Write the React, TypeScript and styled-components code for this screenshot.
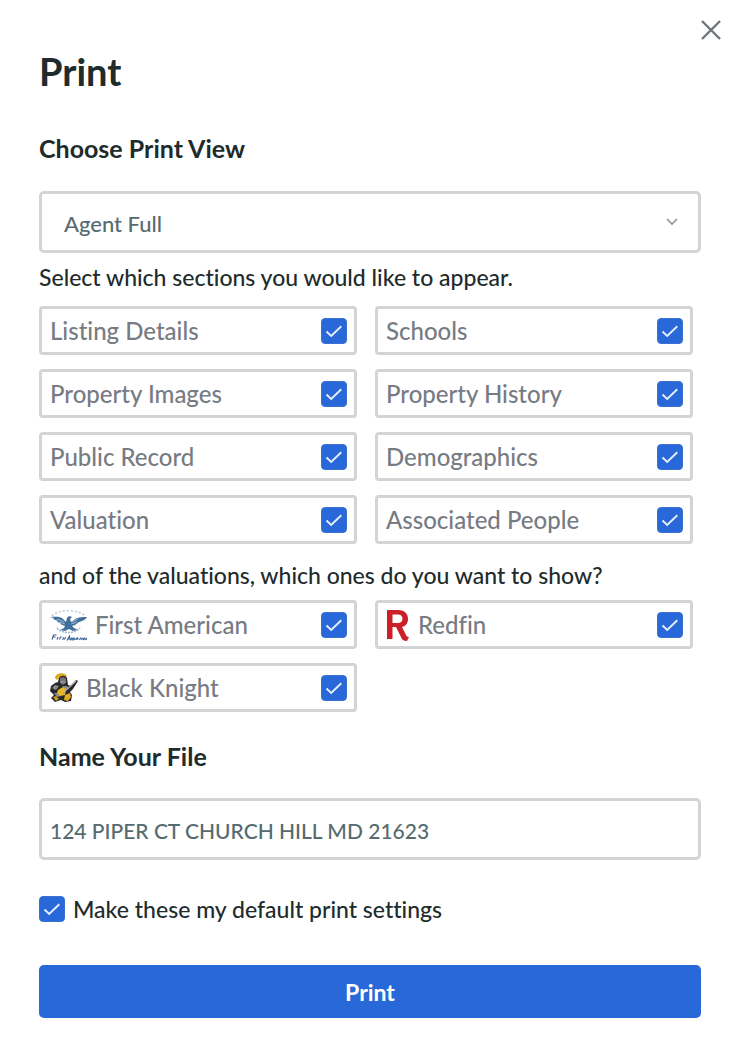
import React, { useState } from 'react';
import styled, { createGlobalStyle } from 'styled-components';

const GlobalStyle = createGlobalStyle`
  *, *::before, *::after { box-sizing: border-box; }
  body {
    margin: 0;
    background: #fff;
    color: #212b2b;
    font-family: Lato, "Liberation Sans", sans-serif;
    font-weight: 500;
    font-variant-ligatures: none;
  }
`;

const Dialog = styled.main`
  display: flex;
  flex-direction: column;
  padding: 18px 43px 30px 39px;
`;

const TopBar = styled.div`
  display: flex;
  justify-content: flex-end;
  height: 24px;
  margin-right: -22px;
`;

const CloseButton = styled.button`
  display: flex;
  align-items: center;
  justify-content: center;
  width: 24px;
  height: 24px;
  padding: 0;
  border: 0;
  background: none;
  color: #6f747d;
  cursor: pointer;
`;

const Title = styled.h1`
  margin: 6px 0 10px;
  font-size: 38px;
  line-height: 46px;
  font-weight: 700;
`;

const FieldHeading = styled.label`
  display: block;
  margin-top: 28px;
  font-size: 25px;
  line-height: 32px;
  font-weight: 700;
`;

const SelectBox = styled.div`
  display: grid;
  align-items: center;
  margin-top: 27px;
  & > * { grid-area: 1 / 1; }
  & > svg {
    justify-self: end;
    margin-right: 22px;
    color: #8c979b;
    pointer-events: none;
  }
`;

const Select = styled.select`
  appearance: none;
  width: 100%;
  height: 62px;
  padding: 2px 48px 0 22px;
  border: 3px solid #d4d4d4;
  border-radius: 5px;
  background: #fff;
  color: #566b70;
  font: inherit;
  font-size: 22px;
`;

const TextInput = styled.input`
  width: 100%;
  height: 62px;
  margin-top: 26px;
  padding: 2px 8px 0;
  border: 3px solid #d4d4d4;
  border-radius: 5px;
  background: #fff;
  color: #566b70;
  font: inherit;
  font-size: 21px;
`;

const Group = styled.fieldset`
  min-width: 0;
  margin: 0;
  padding: 0;
  border: 0;
`;

const Legend = styled.legend<{ $followUp?: boolean }>`
  padding: ${({ $followUp }) => ($followUp ? '15px 0 9px' : '8px 0 13px')};
  font-size: 23px;
  line-height: 32px;
`;

const OptionGrid = styled.div`
  display: grid;
  grid-template-columns: 1fr 1fr;
  gap: 14px 18px;
  padding-right: 8px;
`;

const Option = styled.label`
  display: flex;
  align-items: center;
  height: 49px;
  padding: 0 7px 0 8px;
  border: 3px solid #d4d4d4;
  border-radius: 4px;
  color: #777b84;
  font-size: 24px;
  cursor: pointer;
`;

const OptionText = styled.span`
  flex: 1;
  white-space: nowrap;
`;

const Logo = styled.span`
  display: flex;
  margin-right: 8px;
`;

const CheckShell = styled.span`
  display: grid;
  place-items: center;
  flex: none;
  & > * { grid-area: 1 / 1; }
  & > svg { pointer-events: none; visibility: hidden; }
  & > input:checked + svg { visibility: visible; }
`;

const CheckInput = styled.input`
  appearance: none;
  width: 26px;
  height: 26px;
  margin: 0;
  border: 1px solid #b9bdc4;
  border-radius: 4px;
  background: #fff;
  cursor: pointer;
  &:checked { background: #2868d8; border-color: #3b72d2; }
`;

const DefaultRow = styled.label`
  display: flex;
  align-items: center;
  gap: 8px;
  align-self: flex-start;
  margin-top: 33px;
  font-size: 23px;
  line-height: 32px;
`;

const PrintButton = styled.button`
  height: 53px;
  margin-top: 40px;
  border: 0;
  border-radius: 5px;
  background: #2868d8;
  color: #fff;
  font: inherit;
  font-size: 23px;
  font-weight: 700;
  cursor: pointer;
`;

function Check({ name }: { name: string }) {
  const [on, setOn] = useState(true);
  return (
    <CheckShell>
      <CheckInput type="checkbox" name={name} checked={on} onChange={() => setOn(!on)} />
      <svg width="26" height="26" viewBox="0 0 26 26" fill="none" aria-hidden="true">
        <path d="M5.5 13.5 10.2 18 20.3 8.3" stroke="#e8f0ff" strokeWidth="1.9" />
      </svg>
    </CheckShell>
  );
}

const EagleLogo = () => (
  <svg width="37" height="34" viewBox="0 0 37 34" fill="none" aria-hidden="true">
    <path d="M2 8C8 1 29 1 35 8" stroke="#b9c9d8" strokeWidth="1.500" strokeDasharray="2 2" />
    <path
      d="M0 9c5 0 10-1 13 2l3 3 1-4c1-2 3-2 5-1l-2 2 1 3 3-2c3-3 8-3 13-3-1 2-3 3-5 4l-3 1-4 3-3 1 2 2 4 2-5 1-4-2-4 2-5-1 4-2 1-2-5-2 1-1-4-1 1-1-5-2 1-1Z"
      fill="#3f6f9c"
    />
    <path d="m7 11 7 3m-5 0 6 2m13-5-6 3m5 0-6 2" stroke="#9db8cf" />
    <path d="M7 20c5 6 18 6 23 0" stroke="#9db8cf" strokeWidth="1.600" strokeDasharray="2 1" />
    <path
      d="m2 31.500 1.500-4.500h3m-4 2h3M7 31.500 8 29m1.500 2.500 1-2.500h1m.5 2.500c2 0 2-2 .5-2m2 2 1-2.500m1.500 3.500 2.500-4.500 1 4.500m-3-1.500h2.500m1 1 1-2 1 2 1-2 1 2m1-1h2c0-2-2-1-2 1m3.500 0 1-2 1 0m0 2 1-2m1 2c-1-3 3-2 1 0m1.500 0 1-2 1 2"
      stroke="#345f94"
      strokeWidth="1.100"
    />
  </svg>
);

const RedfinLogo = () => (
  <svg width="24" height="32" viewBox="0 0 24 32" aria-hidden="true">
    <path
      fill="#cb2027"
      fillRule="evenodd"
      d="M1 1h11c7 0 10 4 10 9 0 4-2 7-6 8l4 8c1 2 2 2 3 2l-2 4c-3 0-5-1-6-4l-5-10H6.500v12H1ZM6.500 5.500v8.500H12c6 0 6-8.500 0-8.500Z"
    />
  </svg>
);

const KnightLogo = () => (
  <svg width="28" height="30" viewBox="0 0 28 30" aria-hidden="true">
    <path d="M5 5c0-4 6-6 10-4l2 2-7 1-3 3Z" fill="#d9aa22" />
    <path d="M9 5c2-3 7-3 8 0l1 7 3 1 5-6 2 1-5 8-3 3 2 3-1 6-6 1-4-2-6 2-4-4 3-3-4-4 1-5 4-3 3-1Z" fill="#282828" />
    <path d="m10 5 4-1 2 2v4l-3 2-3-2Z" fill="#74747a" />
    <path d="m2 15 3-3 4 1-3 4Zm10-2 5 0 2 2-3 2Zm-8 7 5 0 2 3-4 1Z" fill="#8a8a8a" />
    <path d="m8 17 5-3 3 2-1 6-5 1-3-3Z" fill="#e8b723" />
    <path d="m15 22 5-2 1 4-3 4-4-1Z" fill="#e0ae20" />
    <path d="m3 24 3-1 3 3-3 2Z" fill="#c79819" />
    <path d="m13 20 13-12M10 9l5 0" stroke="#a9a9a9" strokeWidth="1.200" />
  </svg>
);

const sections = [
  'Listing Details',
  'Schools',
  'Property Images',
  'Property History',
  'Public Record',
  'Demographics',
  'Valuation',
  'Associated People',
];

const valuations = [
  { name: 'First American', logo: <EagleLogo /> },
  { name: 'Redfin', logo: <RedfinLogo /> },
  { name: 'Black Knight', logo: <KnightLogo /> },
];

export default function App() {
  return (
    <>
      <GlobalStyle />
      <Dialog>
        <TopBar>
          <CloseButton type="button" aria-label="Close">
            <svg width="20" height="20" viewBox="0 0 20 20" fill="none" aria-hidden="true">
              <path d="m1 1 18 18M19 1 1 19" stroke="currentColor" strokeWidth="2.400" />
            </svg>
          </CloseButton>
        </TopBar>
        <Title>Print</Title>
        <FieldHeading htmlFor="view">Choose Print View</FieldHeading>
        <SelectBox>
          <Select id="view" defaultValue="Agent Full">
            <option>Agent Full</option>
          </Select>
          <svg width="14" height="10" viewBox="0 0 14 10" fill="none" aria-hidden="true">
            <path d="m2 2 5 5 5-5" stroke="currentColor" strokeWidth="1.700" />
          </svg>
        </SelectBox>
        <Group>
          <Legend>Select which sections you would like to appear.</Legend>
          <OptionGrid>
            {sections.map((name) => (
              <Option key={name}>
                <OptionText>{name}</OptionText>
                <Check name={name} />
              </Option>
            ))}
          </OptionGrid>
        </Group>
        <Group>
          <Legend $followUp>and of the valuations, which ones do you want to show?</Legend>
          <OptionGrid>
            {valuations.map(({ name, logo }) => (
              <Option key={name}>
                <Logo>{logo}</Logo>
                <OptionText>{name}</OptionText>
                <Check name={name} />
              </Option>
            ))}
          </OptionGrid>
        </Group>
        <FieldHeading htmlFor="file">Name Your File</FieldHeading>
        <TextInput id="file" type="text" defaultValue="124 PIPER CT CHURCH HILL MD 21623" />
        <DefaultRow>
          <Check name="default" />
          Make these my default print settings
        </DefaultRow>
        <PrintButton type="button">Print</PrintButton>
      </Dialog>
    </>
  );
}
